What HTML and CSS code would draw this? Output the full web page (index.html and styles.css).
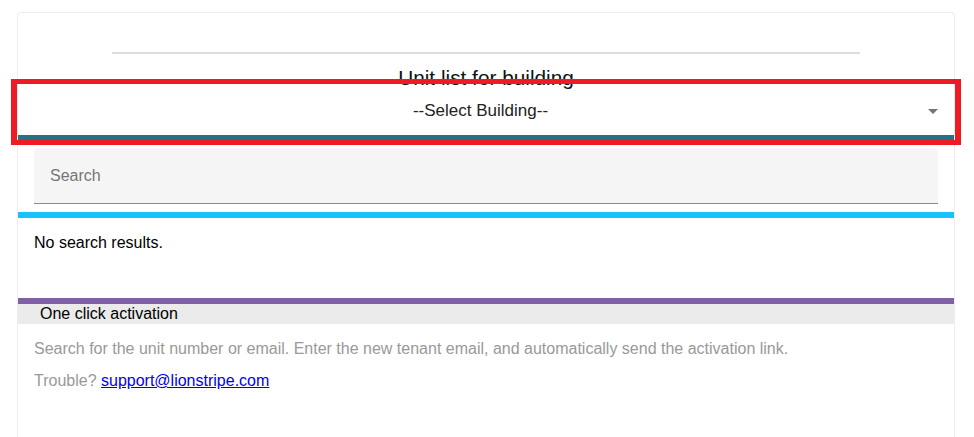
FILE: index.html
```html
<!DOCTYPE html>
<html lang="en">
<head>
    <meta charset="UTF-8">
    <meta name="viewport" content="width=device-width, initial-scale=1.0">
    <title>Unit list</title>
    <link rel="stylesheet" href="styles.css">
</head>
<body>
    <div class="card">
        <div class="top">
            <hr class="rule">
            <h2 class="title">Unit list for building</h2>
        </div>
        <div class="select">
            <span class="select-text">--Select Building--</span>
            <svg class="arrow" width="10" height="5" viewBox="0 0 10 5"><path d="M0 0h10L5 5z" fill="#757575"/></svg>
        </div>
        <div class="search">
            <input type="text" placeholder="Search">
        </div>
        <div class="bar-cyan"></div>
        <div class="results">No search results.</div>
        <div class="bar-purple"></div>
        <div class="help-head">One click activation</div>
        <div class="help">
            <p>Search for the unit number or email. Enter the new tenant email, and automatically send the activation link.</p>
            <p>Trouble? <a href="#">support@lionstripe.com</a></p>
        </div>
    </div>
    <!-- red highlight box drawn over the building select -->
    <div class="highlight"></div>
</body>
</html>
```

FILE: styles.css
```css
*{
    box-sizing: border-box;
}
body{
    margin: 12px 19px 0 17px;
    font-family: "Liberation Sans", Arial, sans-serif;
    font-size: 16px;
    color: #000;
    background: #fff;
}
.card{
    border: 1px solid #eeeeee;
    border-bottom: 0;
    border-radius: 4px 4px 0 0;
    min-height: 425px;
    background: #fff;
}
.top{
    padding-top: 39px;
}
.rule{
    width: 80%;
    margin: 0 auto;
    border: 0;
    height: 2px;
    background: #dddddd;
}
.title{
    margin: 12px 0 -6px;
    font-size: 20.8px;
    font-weight: normal;
    line-height: 24px;
    text-align: center;
    color: #111;
}
.select{
    display: flex;
    align-items: center;
    height: 56px;
    padding: 3px 16px 0 15px;
    border-bottom: 5px solid #277386;
    cursor: pointer;
}
.select-text{
    flex: 1;
    text-align: center;
    font-size: 17px;
    color: #222;
}
.arrow{
    display: block;
}
.highlight{
    position: absolute;
    top: 79px;
    left: 11px;
    width: 950px;
    height: 66px;
    border-style: solid;
    border-color: #ed1c24;
    border-width: 5px 6px;
    pointer-events: none;
}
.search{
    margin: 8px 16px 0;
    background: #f5f5f5;
    border-bottom: 1px solid #8c8c8c;
    border-radius: 4px 4px 0 0;
}
.search input{
    display: block;
    width: 100%;
    height: 55px;
    padding: 0 16px;
    border: 0;
    background: transparent;
    font-family: inherit;
    font-size: 16px;
    outline: none;
}
.search input::placeholder{
    color: #757575;
}
.bar-cyan{
    margin-top: 8px;
    height: 6px;
    background: #17c2fd;
}
.results{
    height: 80px;
    padding: 16px;
}
.bar-purple{
    height: 6px;
    background: #8260a6;
}
.help-head{
    height: 20px;
    line-height: 20px;
    padding-left: 22px;
    background: #ebebeb;
}
.help{
    padding: 16px 16px 0;
    color: #999999;
}
.help p{
    margin: 0 0 14px;
}
.help a{
    color: #0000ee;
}
```
